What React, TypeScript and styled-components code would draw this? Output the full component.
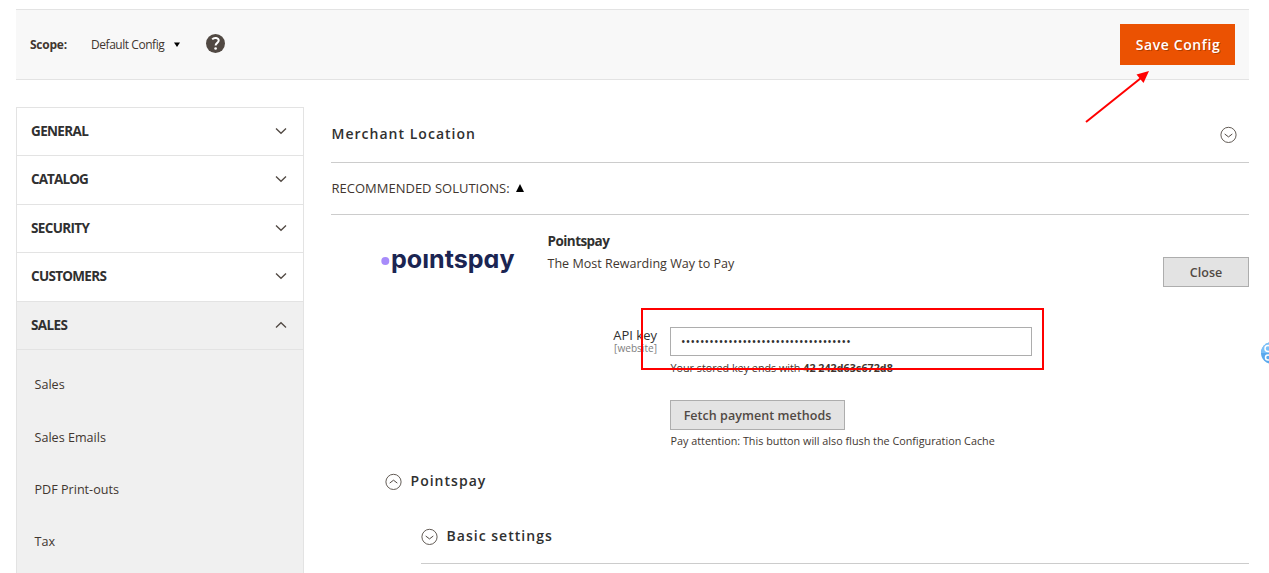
import React from "react";
import styled, { createGlobalStyle } from "styled-components";

const GlobalStyle = createGlobalStyle`
  * { box-sizing: border-box; }
  body {
    margin: 0;
    background: #fff;
    color: #41362f;
    font-family: "Open Sans", "Noto Sans", sans-serif;
    font-size: 13px;
    overflow: hidden;
  }
`;

const Page = styled.div`
  position: relative;
  height: 573px;
  padding: 9px 20px 0 16px;
  overflow: hidden;
`;

const Toolbar = styled.header`
  height: 71px;
  display: flex;
  align-items: center;
  padding: 0 14px;
  background: #f8f8f8;
  border-top: 1px solid #e3e3e3;
  border-bottom: 1px solid #e3e3e3;
`;

const Text = styled.span<{
  $size?: number;
  $weight?: number;
  $spacing?: number;
  $color?: string;
}>`
  display: block;
  white-space: nowrap;
  font-size: ${(p) => p.$size ?? 12}px;
  font-weight: ${(p) => p.$weight ?? 400};
  letter-spacing: ${(p) => p.$spacing ?? 0}px;
  color: ${(p) => p.$color ?? "#41362f"};
`;

const ScopeLabel = styled(Text)`
  width: 61px;
`;

const ScopeSelect = styled.div`
  display: flex;
  align-items: center;
  justify-content: space-between;
  width: 89px;
  margin-right: 26px;
`;

const SaveButton = styled.button`
  width: 115px;
  height: 41px;
  margin-left: auto;
  padding: 0 0 0 1px;
  border: 1px solid #eb5202;
  background: #eb5202;
  color: #fff;
  font: 600 14px "Open Sans", sans-serif;
  letter-spacing: 0.6px;
  white-space: nowrap;
  text-shadow: 1px 1px 0 rgba(0, 0, 0, 0.25);
`;

const Columns = styled.div`
  display: flex;
  align-items: flex-start;
  gap: 27px;
  padding-top: 27px;
`;

const Sidebar = styled.nav`
  width: 288px;
  height: 480px;
  flex: none;
  border: solid #e3e3e3;
  border-width: 0 1px;
`;

const SectionRow = styled.div<{ $open?: boolean }>`
  height: 48px;
  display: flex;
  align-items: center;
  justify-content: space-between;
  padding: 0 16px 2px 14px;
  border-top: 1px solid #e3e3e3;
  background: ${(p) => (p.$open ? "#f0f0f0" : "#fff")};
  &:nth-child(even) { height: 49px; }
`;

const SubMenu = styled.div`
  height: 240px;
  padding: 8.7px 17.5px;
  border-top: 1px solid #e3e3e3;
  background: #f0f0f0;
`;

const SubItem = styled.div`
  height: 52.3px;
  display: flex;
  align-items: center;
`;

const Main = styled.main`
  flex: 1;
  display: flex;
  flex-direction: column;
`;

const LocationHeader = styled.section`
  height: 56px;
  display: flex;
  align-items: center;
  justify-content: space-between;
  padding: 0 12px 0 0.5px;
  border-bottom: 1px solid #ccc;
`;

const Heading = styled(Text)`
  font-size: 14px;
  font-weight: 600;
  letter-spacing: 1.02px;
  color: #303030;
  padding-bottom: 2px;
`;

const Recommended = styled.section`
  height: 52px;
  display: flex;
  align-items: center;
  gap: 6px;
  padding: 0 0 2px 0.5px;
  border-bottom: 1px solid #ccc;
`;

const Provider = styled.section`
  height: 87px;
  display: flex;
  padding-left: 50px;
`;

const Logo = styled.svg`
  width: 136px;
  height: 40px;
  margin-top: 26px;
`;

const ProviderInfo = styled.div`
  flex: 1;
  padding: 17px 0 0 30.5px;
  display: flex;
  flex-direction: column;
  gap: 5px;
`;

const GreyButton = styled.button<{ $width: number }>`
  width: ${(p) => p.$width}px;
  height: 30px;
  padding: 0;
  border: 1px solid #adadad;
  background: #e3e3e3;
  color: #514943;
  font: 600 12.5px "Open Sans", sans-serif;
  letter-spacing: 0.05px;
  white-space: nowrap;
`;

const CloseButton = styled(GreyButton)`
  margin-top: 42px;
`;

const Field = styled.div`
  display: flex;
  gap: 13px;
`;

const FieldLabel = styled.div`
  width: 326px;
  padding-top: 26px;
  display: flex;
  flex-direction: column;
  align-items: flex-end;
`;

const LabelText = styled(Text)`
  height: 13px;
  line-height: 14px;
`;

const FieldBody = styled.div`
  padding-top: 25px;
`;

const KeyInput = styled.div`
  width: 362px;
  height: 29px;
  display: flex;
  align-items: center;
  padding-left: 10px;
  border: 1px solid #adadad;
`;

const Note = styled(Text)`
  height: 16px;
  line-height: 16px;
  margin-top: 4px;
  padding-left: 0.5px;
`;

const FetchNote = styled(Note)`
  margin-top: 3px;
  margin-bottom: 1px;
`;

const FetchButton = styled(GreyButton)`
  display: block;
  margin-top: 24px;
`;

const Group = styled.div<{ $indent: number; $height: number; $line?: boolean }>`
  height: ${(p) => p.$height}px;
  margin-left: ${(p) => p.$indent}px;
  display: flex;
  align-items: center;
  gap: 8.5px;
  padding-bottom: ${(p) => (p.$line ? 3 : 0)}px;
  border-bottom: ${(p) => (p.$line ? "1px solid #ccc" : "0")};
`;

const Annotation = styled.svg`
  position: absolute;
  left: 0;
  top: 0;
  pointer-events: none;
`;

const HelpIconSvg = styled.svg`
  margin-bottom: 3px;
`;

const Chevron = ({ up }: { up?: boolean }) => (
  <svg width="12" height="8" viewBox="0 0 12 8" fill="none">
    <path d={up ? "M1 6.5 6 1.700l5 4.800" : "M1 1.500 6 6.300l5-4.800"} stroke="#514943" strokeWidth="1.3" />
  </svg>
);

const CircleChevron = ({ up }: { up?: boolean }) => (
  <svg width="17" height="17" viewBox="0 0 17 17" fill="none" stroke="#514943">
    <circle cx="8.5" cy="8.9" r="7.600" strokeWidth="0.9" />
    <path d={up ? "M4.700 10.100 8.500 7.200l3.800 2.900" : "M4.700 8 8.500 10.900l3.800-2.900"} strokeWidth="1" />
  </svg>
);

const HelpIcon = () => (
  <HelpIconSvg width="19" height="19" viewBox="0 0 19 19">
    <circle cx="9.5" cy="9.5" r="9.5" fill="#514943" />
    <path d="M6.200 5.400c1.900-2.200 6.500-1.700 6.500 1.200 0 2.300-3.100 2.300-3.100 4.900" fill="none" stroke="#fff" strokeWidth="2" />
    <circle cx="9.6" cy="14.500" r="1.350" fill="#fff" />
  </HelpIconSvg>
);

const sections: { label: string; spacing: number; open?: boolean }[] = [
  { label: "GENERAL", spacing: -0.65 },
  { label: "CATALOG", spacing: -0.9 },
  { label: "SECURITY", spacing: -0.65 },
  { label: "CUSTOMERS", spacing: -0.7 },
  { label: "SALES", spacing: -0.6, open: true },
];

const subItems = ["Sales", "Sales Emails", "PDF Print-outs", "Tax"];

export default function App() {
  return (
    <Page>
      <GlobalStyle />
      <Toolbar>
        <ScopeLabel $weight={700} $spacing={-0.25}>Scope:</ScopeLabel>
        <ScopeSelect>
          <Text $spacing={-0.45}>Default Config</Text>
          <svg width="6" height="5" viewBox="0 0 6 5"><path d="M0 .5h6L3 5z" /></svg>
        </ScopeSelect>
        <HelpIcon />
        <SaveButton>Save Config</SaveButton>
      </Toolbar>
      <Columns>
        <Sidebar>
          {sections.map((s) => (
            <SectionRow key={s.label} $open={s.open}>
              <Text $size={13.5} $weight={700} $spacing={s.spacing} $color="#303030">{s.label}</Text>
              <Chevron up={s.open} />
            </SectionRow>
          ))}
          <SubMenu>
            {subItems.map((label) => (
              <SubItem key={label}><Text $size={12.6}>{label}</Text></SubItem>
            ))}
          </SubMenu>
        </Sidebar>
        <Main>
          <LocationHeader>
            <Heading>Merchant Location</Heading>
            <CircleChevron />
          </LocationHeader>
          <Recommended>
            <Text $size={13}>RECOMMENDED SOLUTIONS:</Text>
            <svg width="8" height="8" viewBox="0 0 8 8"><path d="M4 0l4 8H0z" /></svg>
          </Recommended>
          <Provider>
            <Logo viewBox="0 0 136 40">
              <circle cx="4.3" cy="20" r="4" fill="#a78bfa" />
              <text
                x="10" y="27.3" textLength="123.500" lengthAdjust="spacingAndGlyphs"
                fontFamily="Inter, sans-serif" fontWeight="700" fontSize="25.500" fill="#1b2552"
                style={{ fontFeatureSettings: '"cv11"' }}
              >poıntspay</text>
            </Logo>
            <ProviderInfo>
              <Text $size={13.5} $weight={700} $spacing={-0.55} $color="#303030">Pointspay</Text>
              <Text $size={12.55}>The Most Rewarding Way to Pay</Text>
            </ProviderInfo>
            <CloseButton $width={86}>Close</CloseButton>
          </Provider>
          <Field>
            <FieldLabel>
              <LabelText $size={13} $weight={500} $color="#303030">API key</LabelText>
              <LabelText $size={10.1} $color="#808080">[website]</LabelText>
            </FieldLabel>
            <FieldBody>
              <KeyInput><Text $spacing={0.21} $color="#303030">{"•".repeat(36)}</Text></KeyInput>
              <Note $size={10.75}>Your stored key ends with <b>42 242d63c672d8</b></Note>
              <FetchButton $width={175}>Fetch payment methods</FetchButton>
              <FetchNote $size={10.8}>Pay attention: This button will also flush the Configuration Cache</FetchNote>
            </FieldBody>
          </Field>
          <Group $indent={54} $height={62}>
            <CircleChevron up />
            <Heading>Pointspay</Heading>
          </Group>
          <Group $indent={90} $height={52} $line>
            <CircleChevron />
            <Heading>Basic settings</Heading>
          </Group>
        </Main>
      </Columns>
      <Annotation width="1269" height="573">
        <rect x="642" y="309" width="401" height="60" fill="none" stroke="#f00" strokeWidth="2" />
        <path d="M1086 122 1141 78" stroke="#f00" strokeWidth="2" />
        <path d="M1149 71 1143.500 83 1136.500 74.500z" fill="#f00" />
        <circle cx="1272" cy="353" r="11" fill="#5aa9ee" />
        <path d="M1261 353a11 11 0 0 1 11-11v11z" fill="#7cc0f8" />
        <circle cx="1268" cy="348.500" r="3" fill="none" stroke="#fff" strokeWidth="1.5" />
        <circle cx="1268" cy="357.500" r="2.500" fill="none" stroke="#fff" strokeWidth="1.5" />
      </Annotation>
    </Page>
  );
}
